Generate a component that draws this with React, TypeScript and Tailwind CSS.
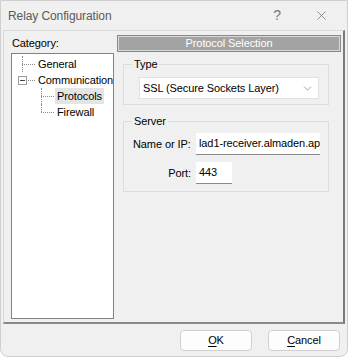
import { ChevronDown, X } from 'lucide-react';

const font = { fontFamily: '"Liberation Sans", Arial, sans-serif', letterSpacing: '-0.1px' };

function TreeRow({ indent, label, selected, expander, last }: { indent: number; label: string; selected?: boolean; expander?: boolean; last?: boolean }) {
  return (
    <div className="flex items-center h-4" style={{ paddingLeft: indent }}>
      <div className="relative w-[18px] h-4 shrink-0">
        {/* dotted connectors */}
        <div className="absolute left-[4px] top-[8px] w-[13px] border-t border-dotted border-[#8a8a8a]" />
        {expander && (
          <div className="absolute left-0 top-[4px] w-[9px] h-[9px] border border-[#9a9a9a] bg-white flex items-center justify-center">
            <div className="w-[5px] h-px bg-[#444]" />
          </div>
        )}
        {!last && !expander && <div className="absolute left-[4px] top-0 h-4 border-l border-dotted border-[#8a8a8a]" />}
        {last && <div className="absolute left-[4px] top-0 h-[8px] border-l border-dotted border-[#8a8a8a]" />}
      </div>
      <span className={`px-[2px] leading-4 text-[11px] text-black whitespace-nowrap ${selected ? 'bg-[#e4e4e4]' : ''}`}>{label}</span>
    </div>
  );
}

export default function App() {
  return (
    <div className="w-[348px] h-[357px] bg-white" style={font}>
      <div className="w-full h-full bg-[#f0f0f0] border border-[#cfcfcf] rounded-b-[8px] flex flex-col">
        {/* Title bar */}
        <div className="h-[29px] flex items-center pl-[7px] pr-[18px] shrink-0">
          <span className="text-[12px] text-[#5a5a5a] flex-1">Relay Configuration</span>
          <span className="text-[14px] text-[#777] mr-[33px]">?</span>
          <X size={15} strokeWidth={1.1} className="text-[#666]" />
        </div>

        {/* Main frame */}
        <div className="mx-[2px] h-[294px] border-t border-l border-[#dadada] border-r-2 border-r-[#7a7a7a] border-b-2 border-b-[#8a8a8a] flex pl-[7px] pt-[5px] pb-[3px] pr-[2px] gap-[3px]">
          {/* Left: category */}
          <div className="w-[103px] flex flex-col">
            <div className="text-[11px] text-black h-[17px] leading-[15px] pl-[1px]">Category:</div>
            <div className="flex-1 bg-white border border-[#828282] pt-[2px] overflow-hidden">
              <TreeRow indent={6} label="General" />
              <TreeRow indent={6} label="Communication" expander />
              <TreeRow indent={25} label="Protocols" selected />
              <TreeRow indent={25} label="Firewall" last />
            </div>
          </div>

          {/* Right: protocol selection */}
          <div className="flex-1 flex flex-col">
            <div className="h-[15px] bg-[#a3a3a3] border border-[#d8d8d8] outline outline-1 outline-[#888] flex items-center justify-center text-[11px] text-white mx-[1px]">
              Protocol Selection
            </div>

            {/* Type group */}
            <div className="relative mt-[13px] ml-[6px] mr-[12px] h-[41px] border border-[#dcdcdc]">
              <span className="absolute left-[8px] -top-[9px] bg-[#f0f0f0] px-[2px] text-[11px] text-black leading-4">Type</span>
              <div className="absolute left-[15px] right-[9px] top-[12px] h-[22px] bg-white border border-[#e2e2e2] flex items-center pl-[3px] pr-[4px]">
                <span className="flex-1 text-[11px] text-black">SSL (Secure Sockets Layer)</span>
                <ChevronDown size={13} strokeWidth={1} className="text-[#555]" />
              </div>
            </div>

            {/* Server group */}
            <div className="relative mt-[16px] ml-[6px] mr-[12px] h-[71px] border border-[#dcdcdc]">
              <span className="absolute left-[8px] -top-[9px] bg-[#f0f0f0] px-[2px] text-[11px] text-black leading-4">Server</span>
              <div className="flex flex-col pt-[11px] pl-[9px] gap-[7px]">
                <div className="flex items-center">
                  <span className="w-[63px] text-[11px] text-black whitespace-nowrap">Name or IP:</span>
                  <div className="w-[124px] h-[22px] bg-white border-b border-[#8a8a8a] flex items-center pl-[3px] overflow-hidden">
                    <span className="text-[11px] text-black whitespace-nowrap">lad1-receiver.almaden.ap</span>
                  </div>
                </div>
                <div className="flex items-center">
                  <span className="w-[63px] pr-[5px] text-right text-[11px] text-black">Port:</span>
                  <div className="w-[36px] h-[22px] bg-white border-b border-[#8a8a8a] flex items-center pl-[3px]">
                    <span className="text-[11px] text-black">443</span>
                  </div>
                </div>
              </div>
            </div>
          </div>
        </div>

        {/* Buttons */}
        <div className="flex justify-end gap-[16px] pr-[7px] pt-[6px]">
          <button className="w-[72px] h-[21px] bg-[#fdfdfd] border border-[#d0d0d0] rounded-[4px] text-[11px] text-black">
            <span className="underline underline-offset-2">O</span>K
          </button>
          <button className="w-[72px] h-[21px] bg-[#fdfdfd] border border-[#d0d0d0] rounded-[4px] text-[11px] text-black">
            <span className="underline underline-offset-2">C</span>ancel
          </button>
        </div>
      </div>
    </div>
  );
}
